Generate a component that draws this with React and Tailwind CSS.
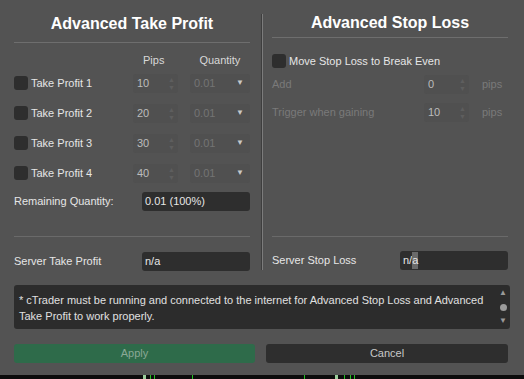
import React from 'react';

const font = { fontFamily: '"Liberation Sans", Arial, sans-serif' };

function Check() {
  return <span className="inline-block w-[14px] h-[14px] rounded-[3px] bg-[#2e2e2e] shrink-0" />;
}

function Spinner() {
  return (
    <span className="flex flex-col items-center leading-none text-[#5e5e5e] text-[7px] gap-[1px]">
      <span>▲</span>
      <span>▼</span>
    </span>
  );
}

function PipsInput({ value }) {
  return (
    <div className="w-[45px] h-[19px] bg-[#505050] rounded-[3px] flex items-center justify-between pl-[4px] pr-[3px]">
      <span className="text-[#bcbcbc]">{value}</span>
      <Spinner />
    </div>
  );
}

function TakeProfitRow({ n, pips }) {
  return (
    <div className="flex items-center h-[30px]">
      <div className="flex items-center w-[119px]">
        <Check />
        <span className="ml-[3px] text-[#e6e6e6]">Take Profit {n}</span>
      </div>
      <PipsInput value={pips} />
      <div className="ml-[12px] w-[60px] h-[19px] bg-[#505050] rounded-[3px] flex items-center justify-between pl-[4px] pr-[6px]">
        <span className="text-[#747474]">0.01</span>
        <span className="text-[#c8c8c8] text-[8px]">▼</span>
      </div>
    </div>
  );
}

function StopRow({ label, value }) {
  return (
    <div className="flex items-center h-[28px]">
      <span className="w-[152px] text-[#7a7a7a]">{label}</span>
      <PipsInput value={value} />
      <span className="ml-[13px] text-[#7a7a7a]">pips</span>
    </div>
  );
}

export default function App() {
  return (
    <div className="w-[524px] h-[379px] bg-[#535353] text-[11px] relative overflow-hidden" style={font}>
      <div className="flex h-[273px]">
        {/* Left column */}
        <div className="w-[261px] pl-[14px] pr-[11px] flex flex-col">
          <h1 className="text-[16px] font-bold text-white text-center mt-[14px] leading-[20px]">Advanced Take Profit</h1>
          <div className="h-px bg-[#6e6e6e] mt-[8px]" />
          <div className="flex mt-[10px] h-[14px] items-center text-[#d8d8d8]">
            <span className="ml-[129px]">Pips</span>
            <span className="ml-[35px]">Quantity</span>
          </div>
          <div className="mt-[1px]">
            <TakeProfitRow n={1} pips={10} />
            <TakeProfitRow n={2} pips={20} />
            <TakeProfitRow n={3} pips={30} />
            <TakeProfitRow n={4} pips={40} />
          </div>
          <div className="flex items-center justify-between mt-[4px]">
            <span className="text-[#e6e6e6]">Remaining Quantity:</span>
            <div className="w-[108px] h-[19px] bg-[#2e2e2e] rounded-[3px] flex items-center pl-[3px] text-[#e6e6e6]">0.01 (100%)</div>
          </div>
          <div className="h-px bg-[#6a6a6a] mt-[25px]" />
          <div className="flex items-center justify-between mt-[15px]">
            <span className="text-[#e6e6e6]">Server Take Profit</span>
            <div className="w-[108px] h-[19px] bg-[#2e2e2e] rounded-[3px] flex items-center pl-[3px] text-[#e6e6e6]">n/a</div>
          </div>
        </div>

        {/* Divider */}
        <div className="w-[2px] mt-[14px] h-[256px] bg-[#7c7c7c] border-l border-[#3e3e3e]" />

        {/* Right column */}
        <div className="flex-1 pl-[9px] pr-[16px] flex flex-col">
          <h1 className="text-[16px] font-bold text-white text-center mt-[13px] leading-[20px]">Advanced Stop Loss</h1>
          <div className="h-px bg-[#6e6e6e] mt-[4px]" />
          <div className="flex items-center mt-[15px]">
            <Check />
            <span className="ml-[3px] text-[#e6e6e6]">Move Stop Loss to Break Even</span>
          </div>
          <div className="mt-[1px]">
            <StopRow label="Add" value={0} />
            <StopRow label="Trigger when gaining" value={10} />
          </div>
          <div className="flex-1" />
          <div className="h-px bg-[#6a6a6a]" />
          <div className="flex items-center justify-between mt-[14px] mb-[3px]">
            <span className="text-[#e6e6e6]">Server Stop Loss</span>
            <div className="w-[108px] h-[19px] bg-[#2e2e2e] rounded-[3px] flex items-center pl-[3px] text-[#e6e6e6]">
              n/<span className="bg-[#6a6a6a]">a</span>
            </div>
          </div>
        </div>
      </div>

      {/* Info box */}
      <div className="mx-[14px] mt-[12px] w-[496px] h-[44px] bg-[#2c2c2c] rounded-[3px] flex">
        <p className="flex-1 px-[5px] pt-[7px] text-[11px] leading-[16px] text-[#e0e0e0]">
          * cTrader must be running and connected to the internet for Advanced Stop Loss and Advanced Take Profit to work properly.
        </p>
        <div className="w-[14px] flex flex-col items-center justify-between py-[4px] text-[#9a9a9a] text-[8px] leading-none">
          <span>▲</span>
          <span className="w-[7px] h-[7px] rounded-full bg-[#9a9a9a]" />
          <span>▼</span>
        </div>
      </div>

      {/* Buttons */}
      <div className="flex mx-[14px] mt-[15px] gap-[11px] w-[494px]">
        <button className="w-[241px] h-[19px] rounded-[3px] bg-[#2e6b4a] text-[#8aa896] text-[11px] leading-none">Apply</button>
        <button className="flex-1 h-[19px] rounded-[3px] bg-[#2e2e2e] text-[#c8c8c8] text-[11px] leading-none">Cancel</button>
      </div>

      {/* Chart strip underneath */}
      <div className="absolute left-0 bottom-0 w-full h-[4px] bg-[#0c0c0c]">
        <span className="absolute left-[143px] top-0 w-[3px] h-[4px] bg-[#9acd9a]" />
        <span className="absolute left-[150px] top-0 w-px h-[4px] bg-[#22c322]" />
        <span className="absolute left-[154px] top-0 w-px h-[4px] bg-[#22c322]" />
        <span className="absolute left-[192px] top-0 w-px h-[4px] bg-[#22c322]" />
        <span className="absolute left-[304px] top-0 w-px h-[4px] bg-[#22c322]" />
        <span className="absolute left-[335px] top-0 w-[3px] h-[4px] bg-[#9acd9a]" />
        <span className="absolute left-[344px] top-0 w-px h-[4px] bg-[#22c322]" />
        <span className="absolute left-[350px] top-0 w-px h-[4px] bg-[#22c322]" />
        <span className="absolute left-[354px] top-0 w-px h-[4px] bg-[#22c322]" />
      </div>
    </div>
  );
}
